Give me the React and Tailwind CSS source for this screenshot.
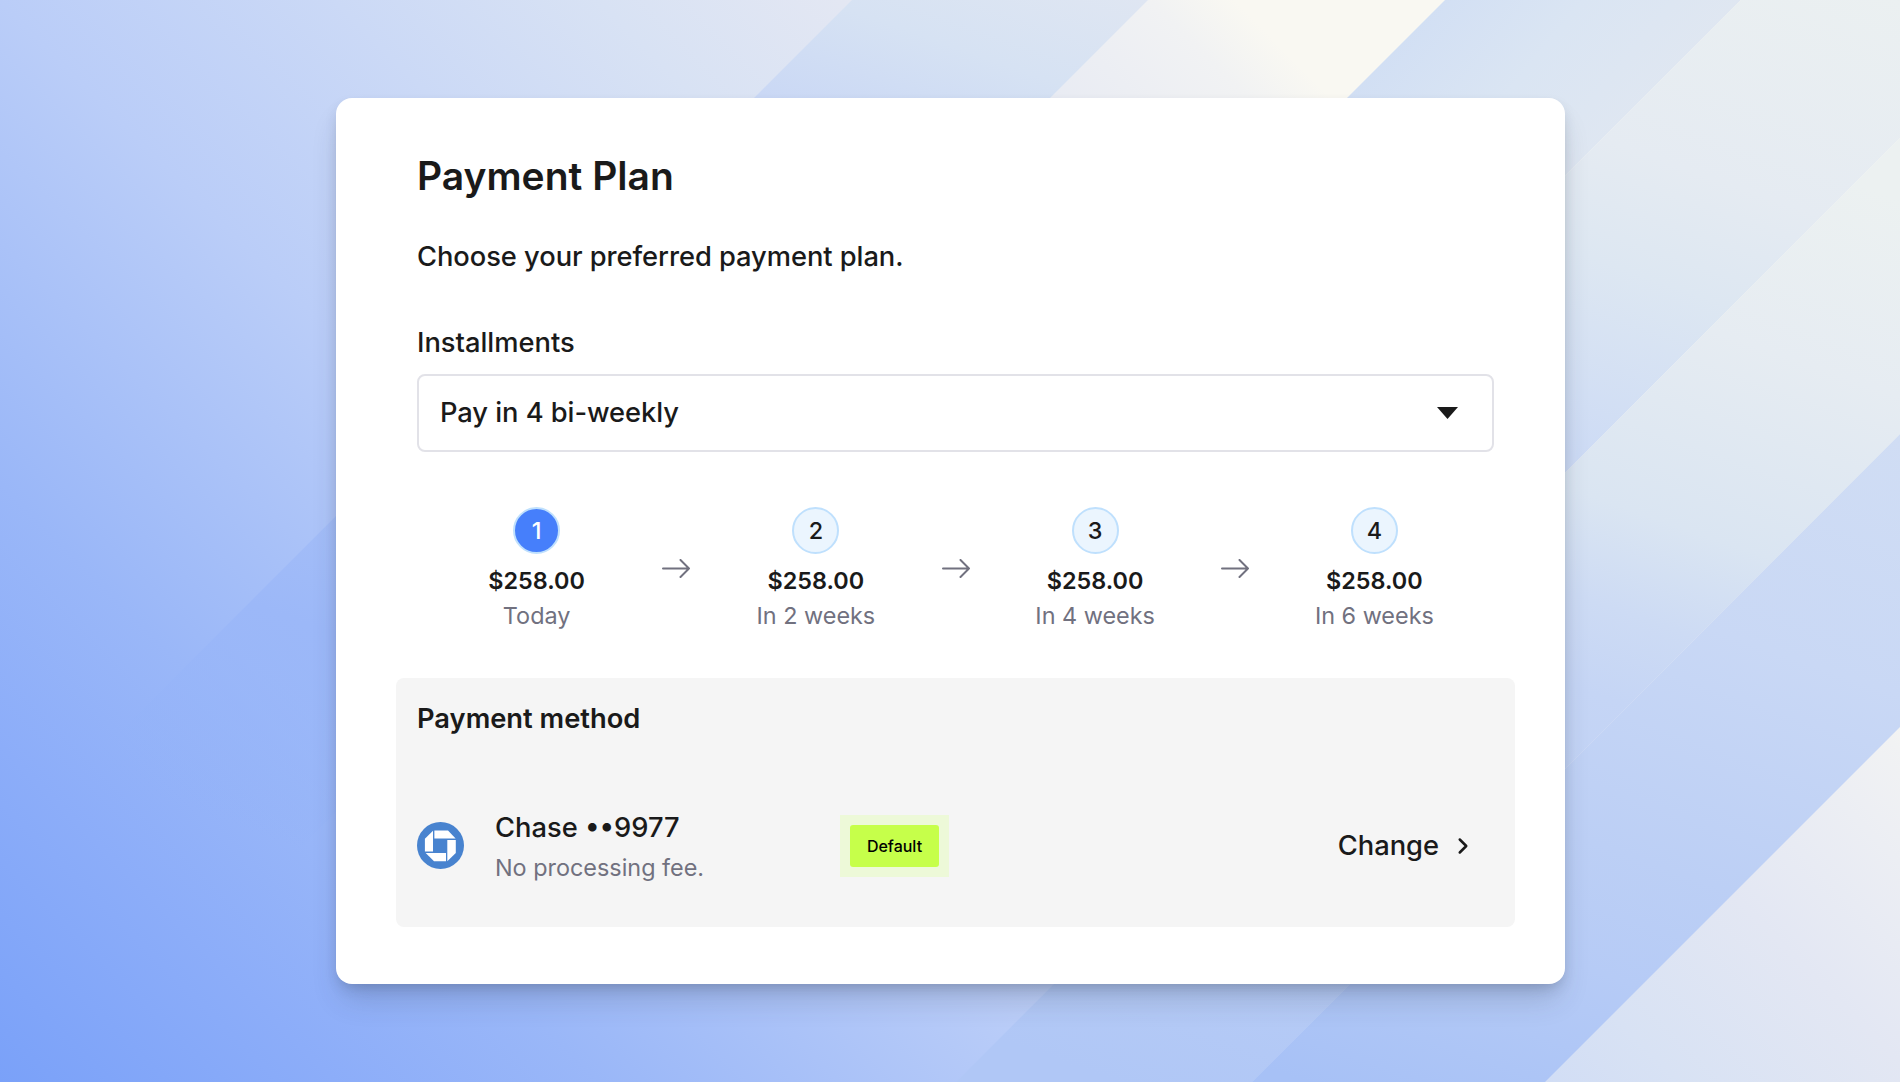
import { ChevronRight } from "lucide-react";

const payments = [
  { step: 1, amount: "$258.00", due: "Today" },
  { step: 2, amount: "$258.00", due: "In 2 weeks" },
  { step: 3, amount: "$258.00", due: "In 4 weeks" },
  { step: 4, amount: "$258.00", due: "In 6 weeks" },
];

// Diagonal bands laid over the base gradient, each with its own fade: [offset, color, opacity]
const bands = [
  {
    id: "b1",
    points: "852,0 1148,0 0,1148 0,852",
    from: [1148, 0],
    to: [790, 1022],
    stops: [[0, "#dfe6f2", 1], [0.1, "#d6e2f3", 1], [0.2, "#cad8f5", 1], [0.8, "#9cb8f8", 1], [1, "#8fb0f9", 0]],
  },
  {
    id: "b3",
    points: "1445,0 1741,0 593,1148 297,1148",
    from: [1400, 0],
    to: [1620, 180],
    stops: [[0, "#d0def4", 1], [0.5, "#dae5f3", 1], [1, "#e0e7f1", 1]],
    clip: true,
  },
  {
    id: "b4",
    points: "1741,0 2038,0 890,1148 593,1148",
    from: [1900, 0],
    to: [1478, 1207],
    stops: [[0, "#ebf0f1", 1], [0.18, "#e5ebf2", 1], [0.27, "#dde7f2", 1], [0.42, "#cddbf5", 1], [0.8, "#b0c6f6", 0]],
  },
  {
    id: "b5",
    points: "2038,0 2334,0 1186,1148 890,1148",
    from: [1900, 200],
    to: [1540, 1229],
    stops: [[0, "#ecf1f1", 1], [0.17, "#e6ecf2", 1], [0.35, "#dae5f2", 1], [0.44, "#cddbf4", 1], [0.52, "#c5d5f5", 1], [1, "#b0c7f6", 1]],
  },
  {
    id: "b6",
    points: "2334,0 2627,0 1479,1148 1186,1148",
    from: [1900, 440],
    to: [1635, 1197],
    stops: [[0, "#d0ddf4", 1], [0.3, "#c9d8f5", 1], [0.6, "#bccff5", 1], [0.75, "#b6cbf6", 1], [1, "#a7c1f6", 1]],
  },
];

function Backdrop() {
  return (
    <svg
      className="absolute inset-0 h-full w-full"
      viewBox="0 0 1900 1082"
      preserveAspectRatio="none"
      aria-hidden="true"
    >
      <defs>
        <linearGradient id="base" gradientUnits="userSpaceOnUse" x1="0" y1="1082" x2="1200" y2="-118">
          <stop offset="0" stopColor="#7aa1f9" />
          <stop offset="0.14" stopColor="#8cadf9" />
          <stop offset="0.25" stopColor="#9ab7f8" />
          <stop offset="0.45" stopColor="#bacdf8" />
          <stop offset="0.59" stopColor="#cbd9f6" />
          <stop offset="0.7" stopColor="#d8e2f4" />
          <stop offset="0.8" stopColor="#e3e7f3" />
          <stop offset="0.93" stopColor="#f1f2f3" />
          <stop offset="0.965" stopColor="#f9f8f2" />
        </linearGradient>
        {bands.map((b) => (
          <linearGradient
            key={b.id}
            id={b.id}
            gradientUnits="userSpaceOnUse"
            x1={b.from[0]}
            y1={b.from[1]}
            x2={b.to[0]}
            y2={b.to[1]}
          >
            {b.stops.map(([offset, color, opacity]) => (
              <stop key={offset} offset={offset} stopColor={color} stopOpacity={opacity} />
            ))}
          </linearGradient>
        ))}
        <clipPath id="upper">
          <rect width="1900" height="600" />
        </clipPath>
      </defs>
      <rect width="1900" height="1082" fill="url(#base)" />
      {bands.map((b) => (
        <polygon
          key={b.id}
          points={b.points}
          fill={`url(#${b.id})`}
          clipPath={b.clip ? "url(#upper)" : undefined}
        />
      ))}
    </svg>
  );
}

function StepArrow() {
  return (
    <svg
      className="-mx-[14px] mt-[52px] h-[19px] w-7 shrink-0"
      viewBox="0 0 28 19"
      fill="none"
      stroke="#71717f"
      strokeWidth="2"
      strokeLinecap="round"
      strokeLinejoin="round"
    >
      <path d="M1 9.5H27M18.5 1L27 9.5L18.5 18" />
    </svg>
  );
}

function Step({ step, amount, due }) {
  const active = step === 1;

  return (
    <div className="flex flex-1 flex-col items-center text-[23.4px]">
      <div
        className={
          active
            ? "flex h-[47px] w-[47px] items-center justify-center rounded-full border-2 border-[#bfe0fd] bg-[#467ffb] font-medium text-white"
            : "flex h-[47px] w-[47px] items-center justify-center rounded-full border-2 border-[#bfe0fd] bg-[#ebf5fe] font-medium text-[#1a1a1a]"
        }
      >
        {step}
      </div>
      <div className="mt-[9px] leading-[35px] font-semibold text-[#1a1a1a]">{amount}</div>
      <div className="leading-[35px] whitespace-nowrap text-[#71717f]">{due}</div>
    </div>
  );
}

function BankLogo() {
  return (
    <svg className="mb-px h-[47px] w-[47px] shrink-0" viewBox="0 0 47 47">
      <circle cx="23.5" cy="23.5" r="23.5" fill="#4883cf" />
      <g fill="#fff">
        <path d="M17.4 8.4H31L38.6 16.6H17.4Z" />
        <path d="M38.8 18V31L30.3 39.2V18Z" />
        <path d="M29 39.3H17L8.7 31H29Z" />
        <path d="M7.9 29.6V16.8L16 8.7V29.6Z" />
      </g>
    </svg>
  );
}

function App() {
  return (
    <div className="relative flex h-[1082px] w-[1900px] justify-center overflow-hidden bg-[#b9cdf7] font-['Inter',sans-serif] text-[#1a1a1a]">
      <Backdrop />

      <main className="relative mt-[98px] ml-px flex h-[886px] w-[1229px] flex-col rounded-2xl bg-white pr-[50px] pl-[60px] shadow-[0_20px_30px_-6px_rgba(40,50,70,0.2),0_6px_14px_-4px_rgba(40,50,70,0.25)]">
        <div className="flex flex-col px-[21px]">
          <h1 className="mt-[54px] text-[39px] leading-[48px] font-semibold">Payment Plan</h1>
          <p className="mt-[37px] text-[27.3px] leading-[40px] font-medium tracking-[-0.05px]">
            Choose your preferred payment plan.
          </p>

          <label className="mt-[46px] text-[27.3px] leading-[40px] font-medium">Installments</label>
          <div className="mt-[11px] flex h-[78px] items-center justify-between rounded-lg border-2 border-[#e2e2e8] pr-[34px] pl-[21px]">
            <span className="text-[27.3px] font-medium tracking-[-0.05px]">Pay in 4 bi-weekly</span>
            <svg className="h-3 w-[21px]" viewBox="0 0 21 12" fill="#1a1a1a">
              <path d="M0 0H21L10.5 12Z" />
            </svg>
          </div>
        </div>

        {/* Schedule */}
        <div className="mt-[55px] flex items-start px-px">
          {payments.map((p, i) => (
            <div key={p.step} className="contents">
              {i > 0 && <StepArrow />}
              <Step {...p} />
            </div>
          ))}
        </div>

        {/* Payment method */}
        <section className="mt-[45px] flex h-[249px] flex-col rounded-lg bg-[#f5f5f5] px-[21px]">
          <h2 className="mt-[21px] text-[27.3px] leading-[40px] font-semibold">Payment method</h2>

          <div className="mt-[68px] flex h-[78px] items-center">
            <BankLogo />
            <div className="ml-[31px] w-[345px]">
              <div className="text-[27.3px] leading-[42px] font-medium">Chase ••9977</div>
              <div className="text-[23.4px] leading-[37px] text-[#71717f]">No processing fee.</div>
            </div>
            <div className="bg-[#edf9d8] p-[10px]">
              <div className="flex h-[42px] w-[89px] items-center justify-center rounded-[3px] bg-[#c6ff4a] text-base font-medium text-black">
                Default
              </div>
            </div>
            <button className="mr-[18px] ml-auto flex items-center gap-[11px] text-[27.3px] font-medium">
              Change
              <ChevronRight size={26} strokeWidth={2.3} />
            </button>
          </div>
        </section>
      </main>
    </div>
  );
}

export default App;
